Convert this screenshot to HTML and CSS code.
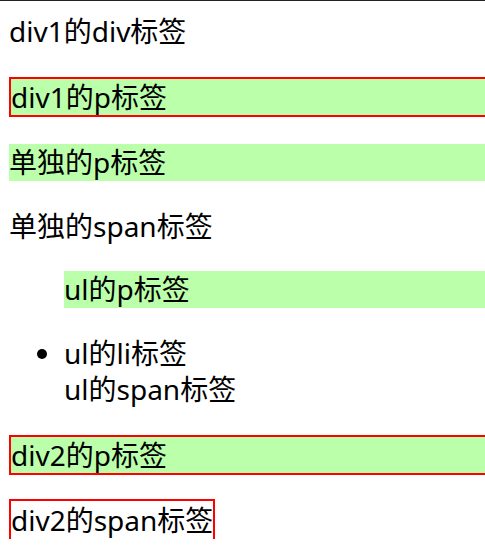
FILE: index.html
```html
<!DOCTYPE html>
<html lang="zh-CN">
<head>
<meta charset="utf-8">
<title>标签</title>
<link rel="stylesheet" href="styles.css">
</head>
<body>
<div class="page">
  <div class="div1">div1的div标签
    <p class="para boxed">div1的p标签</p>
  </div>
  <p class="para">单独的p标签</p>
  <span class="line">单独的span标签</span>
  <ul class="list">
    <p class="para">ul的p标签</p>
    <li class="item">ul的li标签<span class="line">ul的span标签</span></li>
  </ul>
  <div class="div2">
    <p class="para boxed">div2的p标签</p>
    <span class="boxed-inline">div2的span标签</span>
  </div>
</div>
</body>
</html>
```
FILE: styles.css
```css
html {
  overflow: hidden;
}
body {
  margin: 0;
  border-top: 1px solid #222;
  font-family: "Noto Sans", "Noto Sans CJK SC", sans-serif;
  font-size: 28px;
  line-height: 36.5px;
  color: #000;
  background: #fff;
}
.page {
  width: 520px;
  padding: 12px 0 0 9px;
}
.para {
  margin: 27px 0;
  background: #bbffaa;
}
.boxed {
  border: 2px solid #f00;
}
.line {
  display: block;
}
.list {
  margin: 27px 0;
  padding-left: 55px;
}
.div2 {
  margin-top: 27px;
}
.boxed-inline {
  border: 2px solid #f00;
  padding: 0 0 2px;
}
```
